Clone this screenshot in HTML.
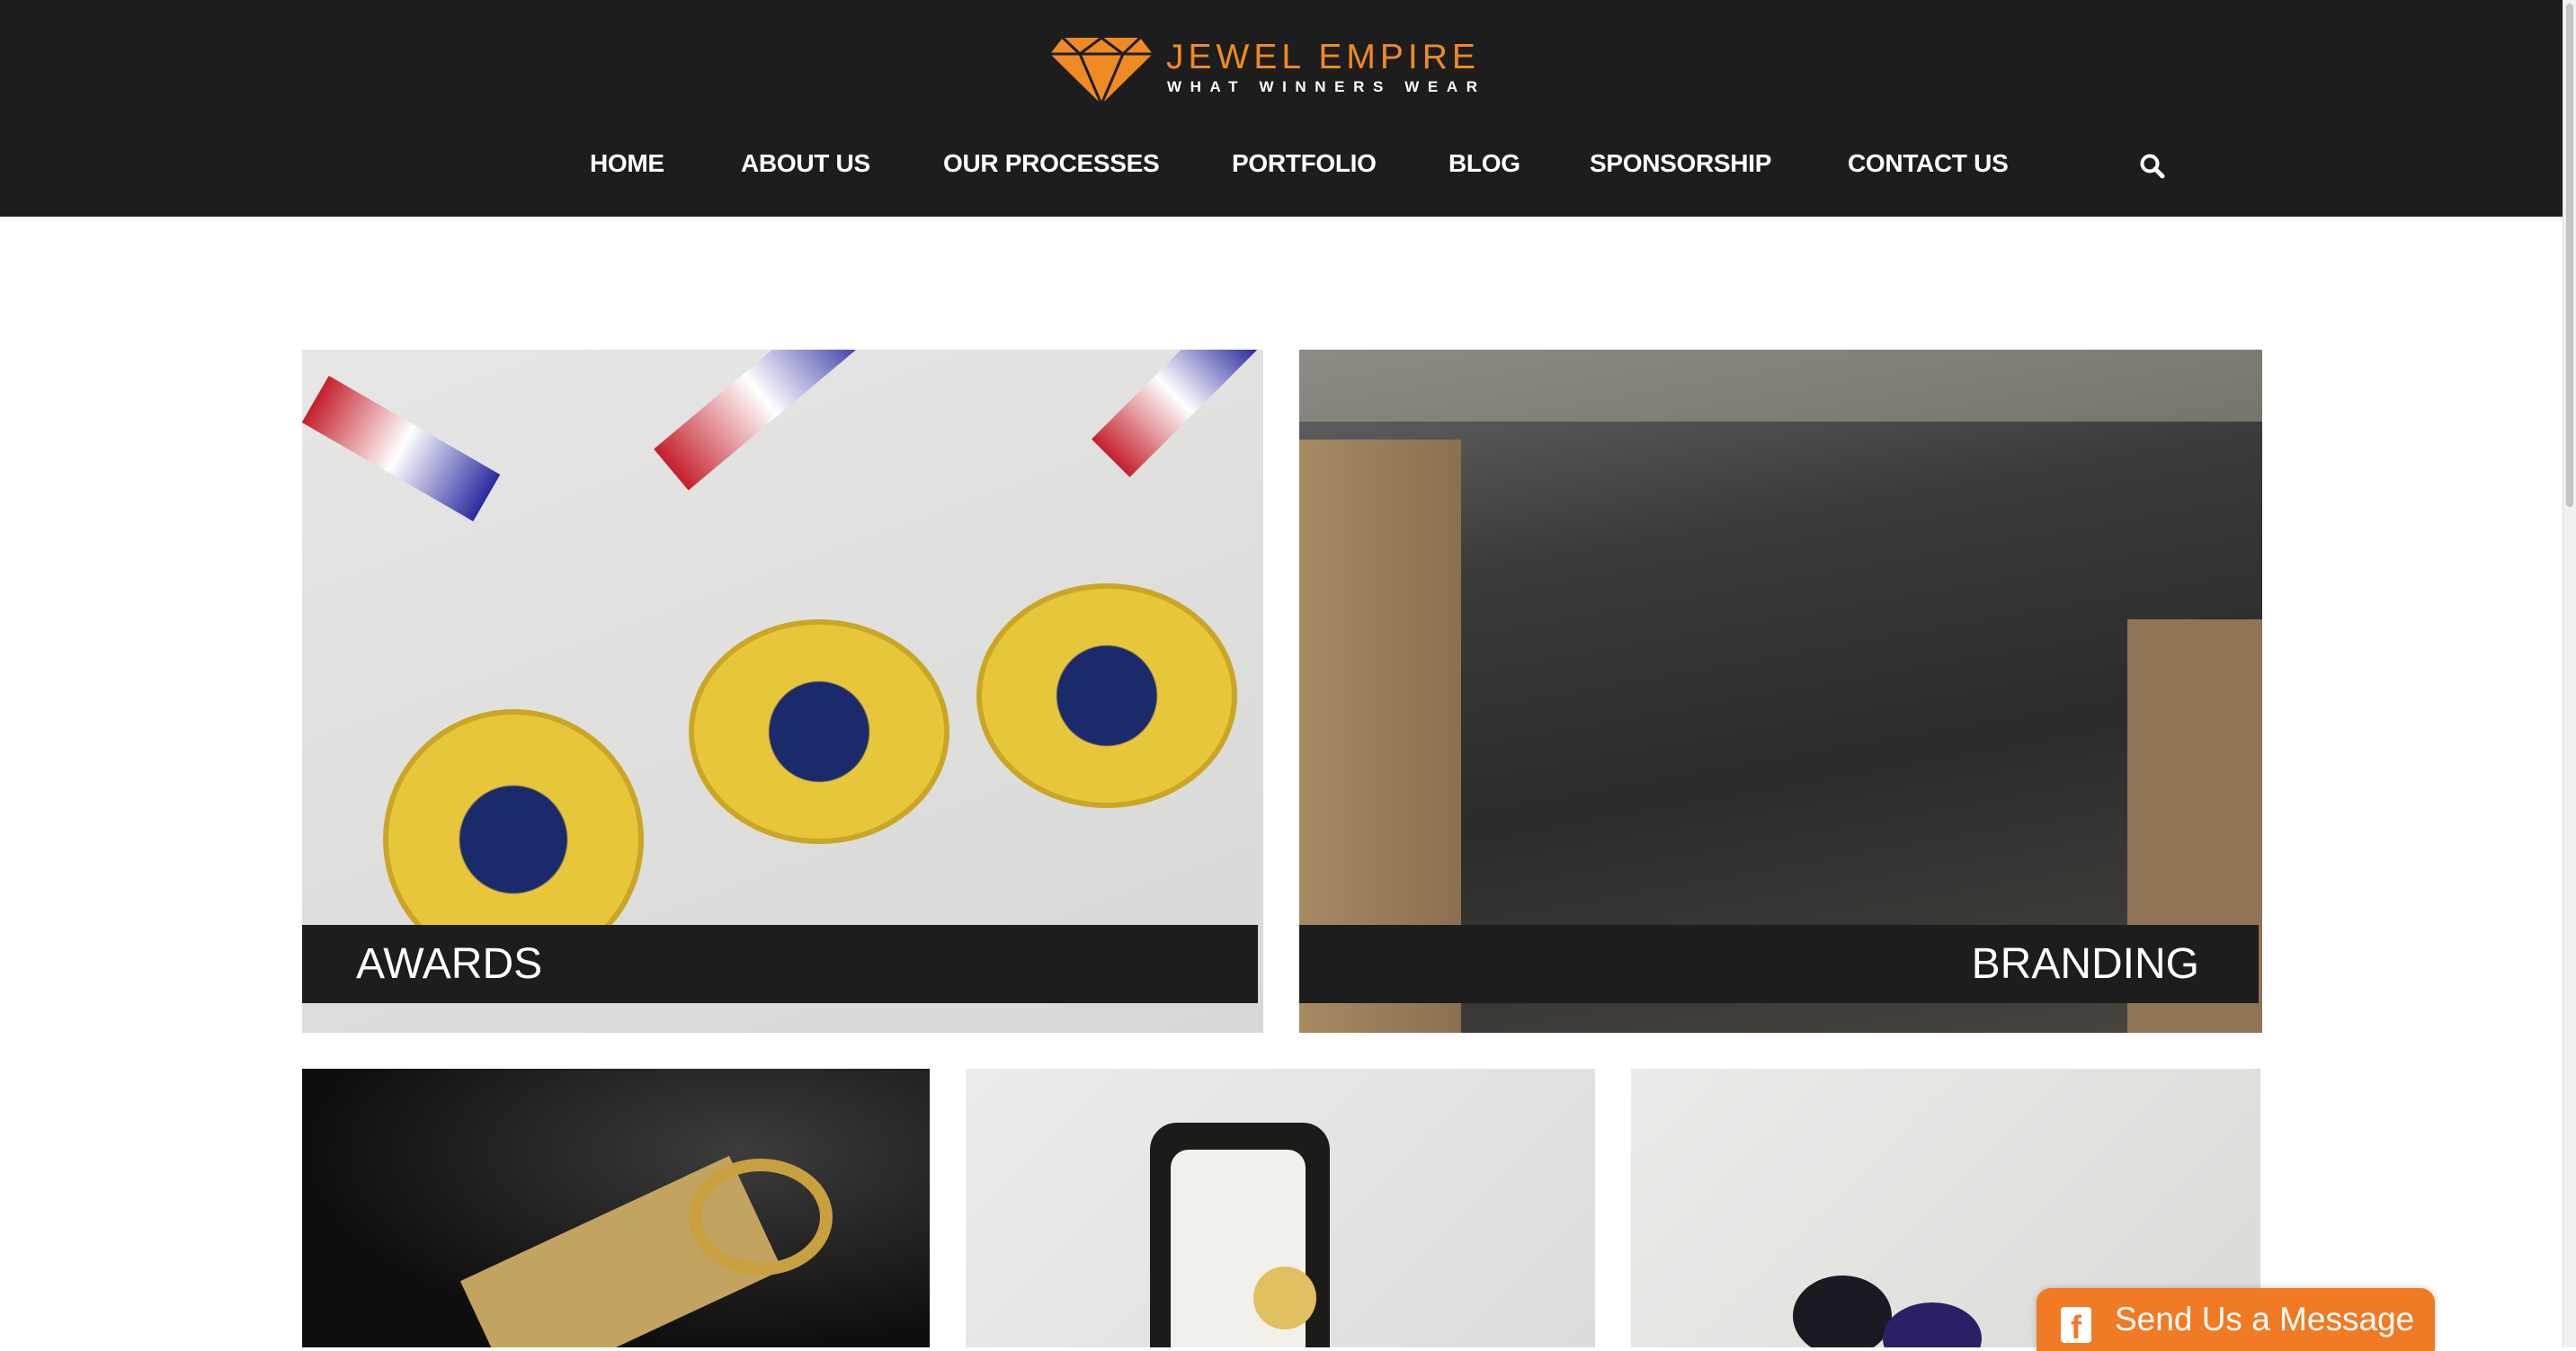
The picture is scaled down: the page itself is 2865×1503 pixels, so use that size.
<!DOCTYPE html>
<html><head><meta charset="utf-8"><style>
*{margin:0;padding:0;box-sizing:border-box}
body{width:2865px;height:1499px;overflow:hidden;background:#fff;font-family:"Liberation Sans",sans-serif;position:relative}
.hdr{position:absolute;left:0;top:0;width:2850px;height:241px;background:#1d1d1d}
.sb{position:absolute;right:0;top:0;width:15px;height:1499px;background:#f1f1f1;border-left:1px solid #ddd}
.sb div{position:absolute;left:3px;top:4px;width:8px;height:560px;background:#c2c2c2;border-radius:4px}
.nav a{position:absolute;top:166px;color:#fff;font-size:28px;font-weight:bold;text-decoration:none;letter-spacing:-0.3px}
.t{position:absolute;overflow:hidden}
.bar{position:absolute;left:0;top:640px;height:87px;background:#1d1d1d;color:#fff;font-size:48px;line-height:87px}
.med{position:absolute;border-radius:50%;background:radial-gradient(circle,#1b2a6b 0 30%,#e8c63a 31% 100%);border:6px solid #c9a625}
</style></head><body>
<div class="hdr">
<svg style="position:absolute;left:1168px;top:42px" width="114" height="74" viewBox="0 0 114 74"><polygon points="14,0 100,0 114,18 57,74 0,18" fill="#f08a24"/><g stroke="#1d1d1d" stroke-width="3" fill="none"><line x1="0" y1="18" x2="114" y2="18"/><polyline points="14,0 33,18 57,0 81,18 100,0"/><polyline points="33,18 57,74 81,18"/></g></svg>
<div style="position:absolute;left:1297px;top:44px;color:#f08a24;font-size:39px;letter-spacing:5px;line-height:40px">JEWEL EMPIRE</div>
<div style="position:absolute;left:1298px;top:87px;color:#fff;font-size:17px;font-weight:bold;letter-spacing:9.6px">WHAT WINNERS WEAR</div>
<div class="nav"><a style="left:656px">HOME</a><a style="left:824px">ABOUT US</a><a style="left:1049px">OUR PROCESSES</a><a style="left:1370px">PORTFOLIO</a><a style="left:1611px">BLOG</a><a style="left:1768px">SPONSORSHIP</a><a style="left:2055px">CONTACT US</a></div>
<svg style="position:absolute;left:2379px;top:170px" width="30" height="30" viewBox="0 0 30 30"><circle cx="12" cy="12" r="8.5" stroke="#fff" stroke-width="4" fill="none"/><line x1="18" y1="18" x2="26" y2="26" stroke="#fff" stroke-width="5" stroke-linecap="round"/></svg>
</div>
<div class="t" style="left:336px;top:389px;width:1069px;height:760px;background:linear-gradient(160deg,#e6e6e4,#d8d8d6)">
<div style="position:absolute;left:0;top:80px;width:220px;height:60px;background:linear-gradient(90deg,#c41f2b,#fff,#2a2aa0);transform:rotate(30deg)"></div>
<div style="position:absolute;left:380px;top:20px;width:260px;height:60px;background:linear-gradient(90deg,#c41f2b,#fff,#2a2aa0);transform:rotate(-40deg)"></div>
<div style="position:absolute;left:870px;top:20px;width:200px;height:60px;background:linear-gradient(90deg,#c41f2b,#fff,#2a2aa0);transform:rotate(-45deg)"></div>
<div class="med" style="left:90px;top:400px;width:290px;height:290px"></div>
<div class="med" style="left:430px;top:300px;width:290px;height:250px"></div>
<div class="med" style="left:750px;top:260px;width:290px;height:250px"></div>
<div class="bar" style="width:1063px;padding-left:60px">AWARDS</div>
</div>
<div class="t" style="left:1445px;top:389px;width:1071px;height:760px;background:linear-gradient(170deg,#6a6a6a 0%,#3a3a3a 30%,#2a2c2c 60%,#4a4540 100%)">
<div style="position:absolute;left:0;top:100px;width:180px;height:660px;background:linear-gradient(90deg,#a78a64,#8a7050)"></div>
<div style="position:absolute;left:0;top:0;width:1071px;height:80px;background:#b2ab9f;opacity:.5"></div>
<div style="position:absolute;right:0;top:300px;width:150px;height:460px;background:#8f7456"></div>
<div class="bar" style="width:1067px;text-align:right;padding-right:66px">BRANDING</div>
</div>
<div class="t" style="left:336px;top:1189px;width:698px;height:310px;background:radial-gradient(ellipse at 70% 30%,#3c3c3c,#0e0e0e 70%)"><div style="position:absolute;left:190px;top:160px;width:330px;height:140px;background:#c2a460;transform:rotate(-25deg)"></div><div style="position:absolute;left:430px;top:100px;width:160px;height:130px;border:14px solid #c9a040;border-radius:50%"></div></div>
<div class="t" style="left:1074px;top:1189px;width:700px;height:310px;background:linear-gradient(135deg,#ececea,#dcdcda)"><div style="position:absolute;left:205px;top:60px;width:200px;height:250px;background:#1d1b1a;border-radius:30px 30px 0 0"></div><div style="position:absolute;left:228px;top:90px;width:150px;height:220px;background:#f2f0ea;border-radius:20px 20px 0 0"></div><div style="position:absolute;left:320px;top:220px;width:70px;height:70px;background:#e0c060;border-radius:50%"></div></div>
<div class="t" style="left:1814px;top:1189px;width:700px;height:310px;background:linear-gradient(135deg,#ebebe9,#dadad7)"><div style="position:absolute;left:180px;top:230px;width:110px;height:90px;background:#1a1a22;border-radius:50%"></div><div style="position:absolute;left:280px;top:260px;width:110px;height:80px;background:#2c1f66;border-radius:50%"></div></div>
<div style="position:absolute;left:2265px;top:1433px;width:443px;height:70px;background:#f07b24;border-radius:16px 16px 0 0;box-shadow:0 0 8px rgba(0,0,0,.2)">
<div style="position:absolute;left:27px;top:21px;width:34px;height:40px;background:#fff;border-radius:4px;color:#f07b24;font-weight:bold;font-size:36px;text-align:center;line-height:46px">f</div>
<div style="position:absolute;left:87px;top:14px;color:#fff;font-size:37px">Send Us a Message</div>
</div>
<div class="sb"><div></div></div>
</body></html>
